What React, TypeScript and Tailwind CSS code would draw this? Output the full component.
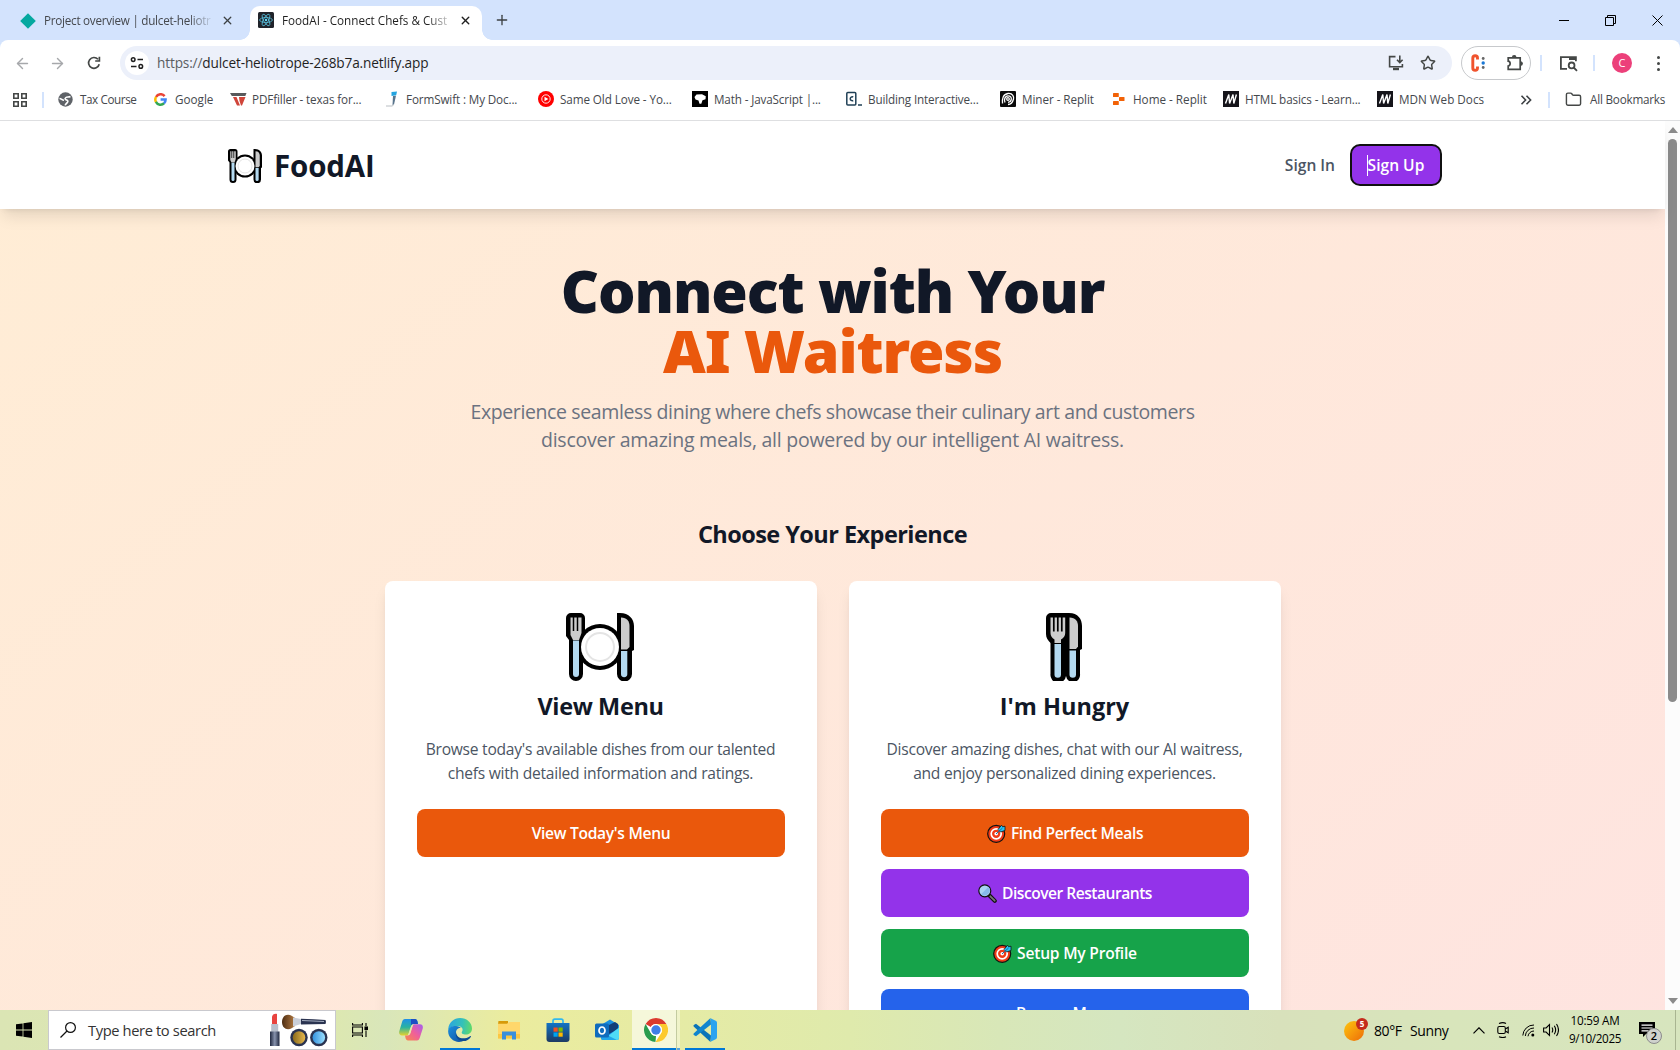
import type { ReactNode } from "react";
import { ArrowLeft, ArrowRight, Folder, Star, X, Plus } from "lucide-react";

/* ---------- Browser icons ---------- */

function ReactIcon() {
  return (
    <svg className="size-4 shrink-0" viewBox="0 0 16 16">
      <rect width="16" height="16" rx="1.5" fill="#20232a" />
      <g fill="none" stroke="#61dafb" strokeWidth=".8" opacity=".85">
        <ellipse cx="8" cy="8" rx="6.4" ry="2.5" />
        <ellipse cx="8" cy="8" rx="6.4" ry="2.5" transform="rotate(60 8 8)" />
        <ellipse cx="8" cy="8" rx="6.4" ry="2.5" transform="rotate(120 8 8)" />
      </g>
      <circle cx="8" cy="8" r="1.2" fill="#61dafb" />
    </svg>
  );
}

function ReloadIcon() {
  return (
    <svg className="size-4" viewBox="0 0 16 16" fill="none" stroke="#444746" strokeWidth="1.7">
      <path d="M13.2 9.2A5.4 5.4 0 1 1 12 4.3" />
      <path d="M13.4 1.8v4.2H9.2" />
    </svg>
  );
}

function TuneIcon() {
  return (
    <svg className="size-4" viewBox="0 0 16 16" fill="none" stroke="#1f1f1f" strokeWidth="1.5">
      <circle cx="4.2" cy="4.6" r="1.8" />
      <path d="M8.5 4.6h5.5M2 11.4h5.5" />
      <circle cx="11.8" cy="11.4" r="1.8" />
    </svg>
  );
}

function InstallIcon() {
  return (
    <svg className="size-[18px]" viewBox="0 0 18 18" fill="none" stroke="#444746" strokeWidth="1.6">
      <path d="M8.5 2.6H2.6v10.2h12.8V10" />
      <path d="M12.8 1.6v6.6M10 5.8l2.8 2.8 2.8-2.8" />
      <path d="M6 15h6" strokeWidth="2.4" />
    </svg>
  );
}

function PuzzleIcon() {
  return (
    <svg className="size-[18px]" viewBox="0 0 18 18" fill="none" stroke="#444746" strokeWidth="1.7">
      <path d="M2.2 3.8h12v11.6h-12v-3.4c2.600-.2 2.600-4.600 0-4.800z" />
      <path d="M6.500 3.400a1.700 1.700 0 0 1 3.400 0zM14.600 7.900a1.700 1.700 0 0 1 0 3.400z" fill="#444746" strokeWidth="1.200" />
    </svg>
  );
}

function LensIcon() {
  return (
    <svg className="size-[19px]" viewBox="0 0 19 19" fill="none" stroke="#444746" strokeWidth="1.8">
      <path d="M8 14.8H1.900V3.200h15v4" />
      <path d="M10 4.500h7" strokeWidth="3" />
      <circle cx="12.600" cy="11.400" r="2.900" />
      <path d="M14.700 13.500l3.300 3.300" />
    </svg>
  );
}

function GlobeIcon() {
  return (
    <svg className="size-[15px]" viewBox="0 0 15 15">
      <circle cx="7.500" cy="7.500" r="7.200" fill="#5f6368" />
      <path d="M1.500 6.500C3.500 6.500 4 8.300 6 8.300 M12.500 4.500C10.500 5.500 9 4.500 8 5.500S6.500 7 8 7.800s2.500 1 1.500 2.500-2 1.500-2.300 3" stroke="#fff" strokeWidth="1.600" fill="none" />
    </svg>
  );
}

function GoogleIcon() {
  return (
    <svg className="ml-px size-[13px]" viewBox="0 0 13 13" fill="none" strokeWidth="2.500">
      <path d="M10.600 3.100A5.200 5.200 0 0 0 2 4" stroke="#ea4335" />
      <path d="M2.100 3.800a5.200 5.200 0 0 0 0 5.400" stroke="#fbbc05" />
      <path d="M1.900 8.900a5.200 5.200 0 0 0 8.300 1.300" stroke="#34a853" />
      <path d="M10 10.400a5.200 5.200 0 0 0 1.600-3.900H6.600" stroke="#4285f4" />
    </svg>
  );
}

function PdfFillerIcon() {
  return (
    <svg className="h-3.5 w-[17px]" viewBox="0 0 17 14">
      <path d="M0 1h16.500l-1.200 3H1.800z" fill="#58595b" />
      <path d="M3 5h3.500L10 13.500H7zM9 5h6.500L12 13.500h-1L9.500 9z" fill="#d0453a" />
    </svg>
  );
}

function FormSwiftIcon() {
  return (
    <svg className="ml-0.5 h-4 w-3" viewBox="0 0 12 16">
      <path d="M5.500 1l5.500-.4-.8 3.600-4.700.8z" fill="#23a4e0" />
      <path d="M7 5l3-.2L8 13.500l-1.500.4z" fill="#59748c" />
      <path d="M0 15h6.500l1-1.500" stroke="#b9bec3" fill="none" />
    </svg>
  );
}

function YouTubeMusicIcon() {
  return (
    <svg className="size-4" viewBox="0 0 16 16">
      <circle cx="8" cy="8" r="8" fill="#f00" />
      <circle cx="8" cy="8" r="4.200" fill="none" stroke="#fff" strokeWidth=".9" />
      <path d="M6.500 5.700L10.300 8l-3.800 2.300z" fill="#fff" />
    </svg>
  );
}

function MathIcon() {
  return (
    <svg className="size-4" viewBox="0 0 16 16">
      <rect width="16" height="16" fill="#000" />
      <path d="M2.500 6L4.500 3.500l5.500-.3 3.800 2-.3 3-3 1L9.300 12.800H7.500L6.500 9.500 3.500 8.500z" fill="#fff" />
    </svg>
  );
}

function CodecademyIcon() {
  return (
    <svg className="size-4" viewBox="0 0 16 16" fill="none" stroke="#204056" strokeWidth="1.500">
      <rect x=".8" y="1.500" width="9" height="12.500" rx="1" />
      <path d="M7.200 6a2 2 0 1 0 0 3.500M12 14h4" />
    </svg>
  );
}

function MinerIcon() {
  return (
    <svg className="size-4" viewBox="0 0 16 16">
      <rect width="16" height="16" rx="1" fill="#0b0b0b" />
      <g fill="none" stroke="#fff" strokeWidth="1.300">
        <path d="M2.500 12.500C2 8 3 3 8 2.500S14 6 13.500 8 12 13.500 8 13.500" />
        <path d="M5 11.500C3.500 8 5.500 4.800 8 4.800s3.500 1.700 3.300 3.500S9.500 11.300 8 11.300" />
        <circle cx="8" cy="8" r="1.300" />
      </g>
    </svg>
  );
}

function ReplitIcon() {
  return (
    <svg className="ml-0.5 h-3.5 w-3" viewBox="0 0 12 14" fill="#f26207">
      <rect x="0" y="1" width="5.800" height="4" rx=".6" />
      <rect x="6" y="5" width="5.500" height="4" rx=".6" />
      <rect x="0" y="9" width="5.800" height="4" rx=".6" />
    </svg>
  );
}

function MdnIcon() {
  return (
    <svg className="size-4" viewBox="0 0 16 16">
      <rect width="16" height="16" fill="#15141a" />
      <path d="M2.500 12.500L5.800 3.500 6.600 12.500 10 3.500 10.800 12.500 13.400 3.500" fill="none" stroke="#fff" strokeWidth="1.400" />
    </svg>
  );
}

/* ---------- Emoji drawings ---------- */

function PlateEmoji({ className }: { className: string }) {
  return (
    <svg className={className} viewBox="0 0 68 68">
      <path d="M5 0h9a5 5 0 0 1 5 5v20l-2 3v33a7 7 0 0 1-14 0V27l-3-4V5a5 5 0 0 1 5-5z" fill="#000" />
      <path d="M51 0h3c9 0 14 6 14 13v24l-2 1v23a7 7 0 0 1-15 0z" fill="#000" />
      <circle cx="34" cy="34" r="23" fill="#000" />
      <path d="M4.500 4.500h11V20l-2.500 7H7L4.500 22z" fill="#ccc" />
      <path d="M7.500 4v14M11.500 4v14" stroke="#000" strokeWidth="1.500" />
      <path d="M7 27.500h6V61a3 3 0 0 1-6 0z" fill="#b3d9f0" />
      <circle cx="34" cy="34" r="19" fill="#fff" />
      <circle cx="34" cy="34" r="14" fill="none" stroke="#e4e4e4" strokeWidth="2" />
      <path d="M55 4.500c6 0 8.500 4 8.500 8.500v21L61 36.500h-6z" fill="#ccc" />
      <path d="M55 38h6.300v23a3.100 3.100 0 0 1-6.300 0z" fill="#b3d9f0" />
    </svg>
  );
}

function CutleryEmoji() {
  return (
    <svg className="mr-0.5 h-[68px] w-9" viewBox="0 0 36 68">
      <path d="M5 0h18c9 0 13 6 13 13v23l-2 1v24a7 7 0 0 1-14 2 7.500 7.500 0 0 1-15.500-2V30C2 27 0 25 0 21V5a5 5 0 0 1 5-5z" fill="#000" />
      <path d="M4.500 4.500h14.700V20c0 3-1.500 5-4.200 6.500v3.500H8.500v-3.500C6 25 4.500 23 4.500 20z" fill="#ccc" />
      <path d="M7.800 4v14.500M11.800 4v14.500M15.800 4v14.500" stroke="#000" strokeWidth="1.700" />
      <path d="M8.500 31H15v30.500a3.200 3.200 0 0 1-6.500 0z" fill="#b3d9f0" />
      <path d="M23.500 4.500c6 0 8.500 4 8.500 8.500v20.500L30 36h-6.500z" fill="#ccc" />
      <path d="M23.500 37.500H30v24a3.200 3.200 0 0 1-6.500 0z" fill="#b3d9f0" />
    </svg>
  );
}

function TargetEmoji() {
  return (
    <svg className="size-[19px] shrink-0" viewBox="0 0 19 19">
      <circle cx="9.200" cy="9.800" r="8.500" fill="#f03a17" stroke="#111" strokeWidth="1.200" />
      <circle cx="9.200" cy="9.800" r="5" fill="none" stroke="#fff" strokeWidth="1.700" />
      <circle cx="9.200" cy="9.800" r="1.800" fill="#fff" />
      <path d="M11 5.500L14.500 1.200l1.200 1.600 2.300-.6v4.300L13.500 8z" fill="#27c3f3" stroke="#111" strokeWidth=".8" />
      <path d="M9 10l6.500-6" stroke="#0b6ea8" strokeWidth="1" />
    </svg>
  );
}

function MagnifierEmoji() {
  return (
    <svg className="size-[19px] shrink-0" viewBox="0 0 19 19">
      <path d="M11.500 11.500l5.300 5.300" stroke="#111" strokeWidth="4" strokeLinecap="round" />
      <path d="M12.300 12.300l4.400 4.400" stroke="#777" strokeWidth="1.800" strokeLinecap="round" />
      <circle cx="6.800" cy="6.800" r="6" fill="#a9d3f2" stroke="#111" strokeWidth="1.200" />
      <path d="M2.800 10.500l7.700-7.700a5.500 5.500 0 0 1-7.700 7.700z" fill="#86b9ea" />
    </svg>
  );
}

/* ---------- Taskbar icons ---------- */

function WindowsIcon() {
  return (
    <svg className="size-4" viewBox="0 0 16 16" fill="#000">
      <path d="M0 2.300L6.600 1.400v6.200H0zM7.400 1.300L16 0v7.600H7.400zM0 8.400h6.600v6.200L0 13.700zM7.400 8.400H16V16l-8.600-1.200z" />
    </svg>
  );
}

function MakeupArt() {
  return (
    <svg className="h-[34px] w-[58px]" viewBox="0 0 58 34">
      <defs>
        <linearGradient id="gold"><stop stopColor="#8a6a1c" /><stop offset="1" stopColor="#e6b84c" /></linearGradient>
        <linearGradient id="sky"><stop stopColor="#3391dd" /><stop offset="1" stopColor="#9be0ff" /></linearGradient>
        <linearGradient id="tube"><stop stopColor="#20283f" /><stop offset=".5" stopColor="#8792ad" /><stop offset="1" stopColor="#20283f" /></linearGradient>
        <linearGradient id="bristle"><stop stopColor="#4e2d12" /><stop offset="1" stopColor="#b27a42" /></linearGradient>
      </defs>
      <path d="M2 12V3.500C3 1 5 .5 7 1v11z" fill="#e8433f" />
      <rect x="1.200" y="11" width="7" height="8" fill="#b9bfcc" />
      <rect x="0" y="18.500" width="9.500" height="14.500" fill="url(#tube)" />
      <path d="M12 9c0-6 5-9 10-6l3 2v8l-3 2c-5 3-10 0-10-6z" fill="url(#bristle)" />
      <path d="M23 4.500l8 1.500v5l-8 2.500z" fill="#c9ced8" />
      <path d="M31 5.800q13 .2 24.500 1.200 1 2 0 4L31 11.500z" fill="#2a3350" />
      <path d="M32 7.500l22 1" stroke="#a4adbf" />
      <circle cx="29" cy="24.500" r="8.700" fill="#2a3350" /><circle cx="29" cy="24.500" r="6.300" fill="url(#gold)" />
      <circle cx="48.800" cy="24.500" r="8.700" fill="#2a3350" /><circle cx="48.800" cy="24.500" r="6.300" fill="url(#sky)" />
    </svg>
  );
}

function TaskViewIcon() {
  return (
    <svg className="size-4" viewBox="0 0 16 16" fill="none" stroke="#000" strokeWidth="1.100">
      <path d="M.6 1v2h9.800V1M.6 15v-2h9.800v2M.6 5h9.800v6H.6zM14 1v3M14 8.500V15" />
      <rect x="13" y="5" width="2.500" height="2.500" fill="#000" />
    </svg>
  );
}

function CopilotIcon() {
  return (
    <svg className="size-6" viewBox="0 0 24 24">
      <defs>
        <linearGradient id="cpA" x1="0" y1="0" x2="0" y2="1"><stop stopColor="#1f8fe8" /><stop offset=".5" stopColor="#29b3a0" /><stop offset="1" stopColor="#e8d22c" /></linearGradient>
        <linearGradient id="cpB" x1="1" y1="0" x2="0" y2="1"><stop stopColor="#a55ef0" /><stop offset=".5" stopColor="#ef5f9a" /><stop offset="1" stopColor="#f8894a" /></linearGradient>
      </defs>
      <path d="M6 1h10c1.500 0 2 1 2.500 2.500L19 6h-4c-2 0-2.500 1-3 2.500L10 15c-.6 2-1.500 2.500-3 2.500H3c-2.500 0-3.500-2-2.500-5l2.700-9C3.700 2 4.500 1 6 1z" fill="url(#cpA)" />
      <path d="M12 1h4c1.500 0 2 1 2.500 2.500L19 6h-5c-1 0-1.500.5-2 1.500z" fill="#1c4fc4" />
      <path d="M18 22.500H9c-1.500 0-2-1-2.500-2.500L6 17.500h2.500c1.500 0 2.200-.8 2.800-2.500l2-6.500c.6-2 1.500-2.200 3-2.200H21c2.500 0 3.500 2 2.500 5l-2.700 8.500c-.5 1.600-1.200 2.700-2.800 2.700z" fill="url(#cpB)" />
      <path d="M11 11l1-2.500c.4-1 1-1.500 2-1.500l-2.500 8c-.6 1.600-1 2-2.500 2.200z" fill="#e4eaa8" />
    </svg>
  );
}

function EdgeIcon() {
  return (
    <svg className="size-6" viewBox="0 0 24 24">
      <defs>
        <linearGradient id="edA" x1="0" y1=".3" x2="1" y2=".4"><stop stopColor="#2aa5e0" /><stop offset=".6" stopColor="#35c1b8" /><stop offset="1" stopColor="#5fd96a" /></linearGradient>
        <linearGradient id="edB" x1="0" y1="0" x2="1" y2="1"><stop stopColor="#1c8fdd" /><stop offset="1" stopColor="#0f4fa0" /></linearGradient>
      </defs>
      <path d="M.3 10.500C1 4.500 6 0 12 0c7 0 12 5 12 10.500 0 4-3 6-6 6-3.300 0-5-1.200-4-2.700 1.700-2.500 0-5.800-4.500-5.800C5 8 1.500 9 .3 12z" fill="url(#edA)" />
      <path d="M.2 12.500C.8 8.500 5 7.800 8 8c2.500.2 4 1 4.800 2-3.500-.5-5 2.500-4.800 5 .3 5 5 7.500 9 6.800-2 1.500-4 2.200-6 2.200C5 24-.5 18.500.2 12.500z" fill="url(#edB)" />
      <path d="M8 14c.2 6 7.500 8.500 14 4.200.8-.4 1.200.1.800.7C21 21.800 17.500 23.500 14.500 23 9.500 22.500 7 18.500 8 14z" fill="#0c4a93" />
    </svg>
  );
}

function ExplorerIcon() {
  return (
    <svg className="h-[19px] w-[22px]" viewBox="0 0 22 19">
      <path d="M.5 0h9.500v3H0z" fill="#d79a09" />
      <path d="M0 2.800h9L11 1h11v16.500H0z" fill="#ffd76b" />
      <path d="M0 13h22v4.500H0z" fill="#fbc743" />
      <path d="M4 18.500V10.500h14v8h-4V14.500H8v4z" fill="#3a8fdc" />
    </svg>
  );
}

function StoreIcon() {
  return (
    <svg className="size-6" viewBox="0 0 24 24">
      <defs><linearGradient id="st" x1="0" y1="0" x2="0" y2="1"><stop stopColor="#1273c4" /><stop offset="1" stopColor="#1d3a63" /></linearGradient></defs>
      <path d="M7 6V3q0-1.800 1.800-1.800h6.400Q17 1.200 17 3v3" fill="none" stroke="#31b9ee" strokeWidth="1.700" />
      <path d="M.5 5h23v16q0 3-3 3h-17q-3 0-3-3z" fill="url(#st)" />
      <path d="M7.500 9.500h4.200v4.200H7.500z" fill="#f25022" /><path d="M12.500 9.500h4.200v4.200h-4.200z" fill="#7fba00" />
      <path d="M7.500 14.500h4.200v4.200H7.500z" fill="#00a4ef" /><path d="M12.500 14.500h4.200v4.200h-4.200z" fill="#ffb900" />
    </svg>
  );
}

function OutlookIcon() {
  return (
    <svg className="size-6" viewBox="0 0 24 24">
      <path d="M6 7l9-5.500L24 7v13q0 2-2 2H8q-2 0-2-2z" fill="#1a8fe0" />
      <path d="M8 10l12-6 3 2v5l-9 5z" fill="#123f78" />
      <path d="M24 9.500V20q0 2-2 2H8L24 9.500z" fill="#4fdcf7" />
      <path d="M6 14l16 8H8q-2 0-2-2z" fill="#20a7ea" />
      <rect x="0" y="5.500" width="14" height="14" rx="1.500" fill="#0f6cbd" />
      <ellipse cx="7" cy="12.500" rx="3" ry="3.500" fill="none" stroke="#fff" strokeWidth="1.700" />
    </svg>
  );
}

function ChromeIcon() {
  return (
    <svg className="size-6" viewBox="0 0 24 24">
      <circle cx="12" cy="12" r="12" fill="#fff" />
      <path d="M12 0a12 12 0 0 1 10.400 6H12a6 6 0 0 0-5.200 3L1.600 6A12 12 0 0 1 12 0z" fill="#db3a2d" />
      <path d="M1.600 6l5.200 9A6 6 0 0 0 12 18l-.5 6A12 12 0 0 1 1.600 6z" fill="#2a9c4c" />
      <path d="M22.400 6A12 12 0 0 1 11.500 24l5.700-9a6 6 0 0 0 0-6L12 6z" fill="#fcca2e" />
      <circle cx="12" cy="12" r="6" fill="#fff" /><circle cx="12" cy="12" r="4.700" fill="#3f7ee8" />
    </svg>
  );
}

function VSCodeIcon() {
  return (
    <svg className="size-6" viewBox="0 0 24 24">
      <path d="M18 17.500L3 5.800 1.200 6.700q-1.400.9-.3 2L17.500 24z" fill="#0a73b8" />
      <path d="M18 6.500L3 18.200l-1.800-.9q-1.400-.9-.3-2L17.500 0z" fill="#0f85cf" />
      <path d="M17 0l5.700 2.700q1.300.6 1.300 2v14.600q0 1.400-1.300 2L17 24q1 0 1-2V2q0-2-1-2z" fill="#2ba4f0" />
    </svg>
  );
}

/* ---------- Browser chrome ---------- */

type Bookmark = { icon: ReactNode; label: string; slot: string; text: string };

const bookmarks: Bookmark[] = [
  { icon: <GlobeIcon />, label: "Tax Course", slot: "w-[95px]", text: "tracking-[-0.41px]" },
  { icon: <GoogleIcon />, label: "Google", slot: "w-[77px]", text: "tracking-normal" },
  { icon: <PdfFillerIcon />, label: "PDFfiller - texas for...", slot: "w-[154px]", text: "tracking-[-0.12px]" },
  { icon: <FormSwiftIcon />, label: "FormSwift : My Doc...", slot: "w-[154px]", text: "tracking-[-0.13px]" },
  { icon: <YouTubeMusicIcon />, label: "Same Old Love - Yo...", slot: "w-[154px]", text: "tracking-[-0.09px]" },
  { icon: <MathIcon />, label: "Math - JavaScript |...", slot: "w-[154px]", text: "tracking-[-0.14px]" },
  { icon: <CodecademyIcon />, label: "Building Interactive...", slot: "w-[154px]", text: "tracking-[-0.15px]" },
  { icon: <MinerIcon />, label: "Miner - Replit", slot: "w-[111px]", text: "tracking-[-0.06px]" },
  { icon: <ReplitIcon />, label: "Home - Replit", slot: "w-[112px]", text: "tracking-normal" },
  { icon: <MdnIcon />, label: "HTML basics - Learn...", slot: "w-[154px]", text: "tracking-[-0.12px]" },
  { icon: <MdnIcon />, label: "MDN Web Docs", slot: "w-[143px]", text: "tracking-normal" },
];

function TabStrip() {
  return (
    <div className="flex h-10 shrink-0 items-end bg-[#d3e3fd] text-[11.7px] text-[#1f1f1f]">
      <div className="flex h-[38px] w-[250px] items-center pb-[1px] pl-5">
        <svg className="mr-2 size-4 shrink-0" viewBox="0 0 16 16"><path d="M8 .2L15.800 8 8 15.800.2 8z" fill="#05a8a0" /></svg>
        <span className="w-[170px] whitespace-nowrap tracking-[-0.26px] text-[#45484d] [mask-image:linear-gradient(to_right,#000_145px,transparent_170px)]">Project overview | dulcet-heliotr</span>
        <X className="ml-[7px] size-[13px] text-[#3c4043]" strokeWidth={2.4} />
      </div>
      <div className="relative flex h-[34px] w-[232px] items-center rounded-t-[10px] bg-white pb-1.5 pl-2">
        <span className="absolute bottom-0 -left-2.5 size-2.5 bg-[radial-gradient(circle_at_0_0,transparent_9.500px,#fff_10px)]" />
        <span className="absolute -right-2.5 bottom-0 size-2.5 bg-[radial-gradient(circle_at_100%_0,transparent_9.500px,#fff_10px)]" />
        <ReactIcon />
        <span className="ml-2 w-[168px] pt-0.5 whitespace-nowrap [mask-image:linear-gradient(to_right,#000_145px,transparent_172px)]">FoodAI - Connect Chefs &amp; Cust</span>
        <X className="ml-[9px] size-[13px]" strokeWidth={2.600} />
      </div>
      <Plus className="mb-3 ml-3 size-4 text-[#3c4043]" strokeWidth={2} />
      <div className="mb-3.5 ml-auto flex items-center pr-[17px]">
        <span className="mr-9 h-px w-2.5 bg-black" />
        <svg className="mr-9 size-[11px]" viewBox="0 0 11 11" fill="none" stroke="#000"><path d="M.5 2.500h8v8h-8zM2.500 2.500v-2h8v8h-2" /></svg>
        <svg className="size-[11px]" viewBox="0 0 11 11" stroke="#000"><path d="M.5.5l10 10M10.500.5l-10 10" /></svg>
      </div>
    </div>
  );
}

function Toolbar() {
  return (
    <div className="flex h-[46px] shrink-0 items-center">
      <div className="flex w-[120px] shrink-0 items-center gap-[18px] pl-3.5">
        <ArrowLeft className="size-[17px] text-[#a6a8ab]" strokeWidth={2} />
        <ArrowRight className="size-[17px] text-[#a6a8ab]" strokeWidth={2} />
        <span className="ml-0.5"><ReloadIcon /></span>
      </div>
      <div className="flex h-[34px] w-[1332px] shrink-0 items-center rounded-full bg-[#ecf0fa] pl-[5px]">
        <span className="flex size-6 items-center justify-center rounded-full bg-white"><TuneIcon /></span>
        <span className="ml-2 pt-px text-[13.650px] tracking-[-0.150px] text-[#1f1f1f]"><span className="text-[#5a5d61]">https://</span>dulcet-heliotrope-268b7a.netlify.app</span>
        <span className="mr-4 ml-auto flex items-center gap-[15px]"><InstallIcon /><Star className="size-[16px] text-[#444746]" strokeWidth={2.200} /></span>
      </div>
      <div className="ml-[9px] flex h-[34px] w-[70px] items-center rounded-full border border-[#c7c9cc] pl-2">
        <svg className="h-[18px] w-[17px]" viewBox="0 0 17 18"><path d="M7.500 5.500V4q0-2.300-2.300-2.300T2.800 4v10q0 2.300 2.400 2.300T7.500 14v-1.500" fill="none" stroke="#f0532d" strokeWidth="2.900" /><circle cx="13.200" cy="4.500" r="1.400" fill="#666" /><circle cx="13.200" cy="9" r="1.700" fill="#1a78d6" /><circle cx="13.200" cy="13.500" r="1.400" fill="#666" /></svg>
        <span className="ml-[19px]"><PuzzleIcon /></span>
      </div>
      <span className="ml-[9px] h-4 w-0.5 bg-[#d3e3fd]" />
      <span className="ml-[17px]"><LensIcon /></span>
      <span className="ml-[15px] h-4 w-0.5 bg-[#d3e3fd]" />
      <span className="ml-[17px] flex size-5 items-center justify-center rounded-full bg-[#ec407a] text-[11px] text-white">C</span>
      <span className="ml-[25px] flex flex-col gap-[3px]">
        <span className="size-[3px] rounded-full bg-[#444746]" /><span className="size-[3px] rounded-full bg-[#444746]" /><span className="size-[3px] rounded-full bg-[#444746]" />
      </span>
    </div>
  );
}

function BookmarksBar() {
  return (
    <div className="flex h-[35px] shrink-0 items-center border-b border-[#dedfe1] pb-[7px] text-[11.7px] text-[#45484d]">
      <svg className="ml-[13px] size-3.5" viewBox="0 0 14 14" fill="none" stroke="#444746" strokeWidth="1.600"><path d="M.8.8h4.400v4.400H.8zM8.800.8h4.400v4.400H8.800zM.8 8.800h4.400v4.400H.8zM8.800 8.800h4.400v4.400H8.800z" /></svg>
      <span className="ml-[15px] h-4 w-0.5 bg-[#d3e3fd]" />
      <div className="ml-[14px] flex">
        {bookmarks.map((b) => (
          <div key={b.label} className={`flex shrink-0 items-center ${b.slot}`}>
            <span className="flex w-[22px] shrink-0 items-center">{b.icon}</span>
            <span className={`pt-px whitespace-nowrap ${b.text}`}>{b.label}</span>
          </div>
        ))}
      </div>
      <svg className="h-2.5 w-3 shrink-0" viewBox="0 0 12 10" fill="none" stroke="#3c4043" strokeWidth="1.600"><path d="M1.500.8L5.600 5 1.500 9.200M6.500.8L10.600 5 6.500 9.200" /></svg>
      <span className="ml-4 h-4 w-0.5 shrink-0 bg-[#d3e3fd]" />
      <Folder className="ml-[15px] size-[17px] shrink-0 text-[#444746]" strokeWidth={2} />
      <span className="ml-2 pt-px whitespace-nowrap tracking-[-0.21px]">All Bookmarks</span>
    </div>
  );
}

/* ---------- Web page ---------- */

function SiteHeader() {
  return (
    <header className="relative flex h-[88px] shrink-0 items-center bg-white pr-[223px] pl-[228px] shadow-lg">
      <PlateEmoji className="mt-0.5 size-[34px]" />
      <span className="ml-3 pt-0.5 text-[29.500px] font-bold tracking-[-0.150px] text-[#111827]">FoodAI</span>
      <span className="mr-[15px] ml-auto pt-0.5 text-[15.600px] font-semibold text-[#4b5563]">Sign In</span>
      <button className="relative h-[42px] w-[92px] rounded-[10px] border-2 border-[#101010] bg-[#9333ea] pt-0.5 text-[15.600px] font-[650] text-white">
        Sign Up
        <span className="absolute top-[9px] left-[15px] h-[21px] w-px bg-white" />
      </button>
    </header>
  );
}

function ActionButton({ color, text, children, icon }: { color: string; text: string; children: ReactNode; icon?: ReactNode }) {
  return (
    <button className={`flex h-12 w-full shrink-0 items-center justify-center gap-[5px] rounded-lg pl-px text-[15.600px] font-[650] text-white ${color} ${text}`}>
      {icon}
      <span className="pt-0.5">{children}</span>
    </button>
  );
}

function ExperienceCard({ art, title, titleClass, lines, children }: { art: ReactNode; title: string; titleClass: string; lines: string[]; children: ReactNode }) {
  return (
    <section className="flex h-[620px] w-[432px] flex-col items-center rounded-lg bg-white p-8 shadow-lg">
      {art}
      <h3 className={`mt-[9px] text-[23.500px] leading-8 font-bold text-[#111827] ${titleClass}`}>{title}</h3>
      <p className="mt-[15px] text-center text-[15.600px] leading-6 tracking-[-0.25px] text-[#4b5563]">
        {lines.map((l) => <span key={l} className="block whitespace-nowrap">{l}</span>)}
      </p>
      <div className="mt-6 flex w-full flex-col gap-3">{children}</div>
    </section>
  );
}

function FoodPage() {
  return (
    <div className="h-[1350px] w-[1665px] shrink-0 bg-linear-to-br from-[#ffedd5] to-[#fee2e2]">
      <SiteHeader />
      <main className="flex flex-col items-center pt-[51px]">
        <h1 className="flex flex-col items-center font-['Noto_Sans'] text-[59px] leading-[60px] font-black text-[#111827]">
          <span className="tracking-[-1.050px]">Connect with Your</span>
          <span className="tracking-[-1.100px] text-[#ea580c]">AI Waitress</span>
        </h1>
        <p className="mt-[18px] flex flex-col items-center text-[19.500px] leading-7 text-[#6b7280]">
          <span className="tracking-[-0.380px]">Experience seamless dining where chefs showcase their culinary art and customers</span>
          <span className="tracking-[-0.250px]">discover amazing meals, all powered by our intelligent AI waitress.</span>
        </p>
        <h2 className="mt-16 text-[23.500px] leading-8 font-bold tracking-[-0.550px] text-[#111827]">Choose Your Experience</h2>
        <div className="mt-[31px] flex gap-8">
          <ExperienceCard
            art={<PlateEmoji className="mr-0.5 size-[68px]" />}
            title="View Menu"
            titleClass="tracking-[-0.380px]"
            lines={["Browse today's available dishes from our talented", "chefs with detailed information and ratings."]}
          >
            <ActionButton color="bg-[#ea580c]" text="tracking-[-0.300px]">View Today's Menu</ActionButton>
          </ExperienceCard>
          <ExperienceCard
            art={<CutleryEmoji />}
            title="I'm Hungry"
            titleClass="tracking-normal"
            lines={["Discover amazing dishes, chat with our AI waitress,", "and enjoy personalized dining experiences."]}
          >
            <ActionButton color="bg-[#ea580c]" text="tracking-[-0.350px]" icon={<TargetEmoji />}>Find Perfect Meals</ActionButton>
            <ActionButton color="bg-[#9333ea]" text="tracking-[-0.500px]" icon={<MagnifierEmoji />}>Discover Restaurants</ActionButton>
            <ActionButton color="bg-[#16a34a]" text="tracking-[-0.220px]" icon={<TargetEmoji />}>Setup My Profile</ActionButton>
            <ActionButton color="bg-[#2563eb]" text="tracking-[-0.480px]">Browse Menu</ActionButton>
          </ExperienceCard>
        </div>
      </main>
    </div>
  );
}

function Scrollbar() {
  return (
    <div className="flex w-[15px] shrink-0 flex-col items-center bg-[#fcfcfc] py-[6px]">
      <span className="h-0 w-0 border-x-[5px] border-b-[6px] border-x-transparent border-b-[#8b8b8b]" />
      <span className="mt-1.5 h-[563px] w-[9px] rounded-full bg-[#8b8b8b]" />
      <span className="mt-auto h-0 w-0 border-x-[5px] border-t-[6px] border-x-transparent border-t-[#8b8b8b]" />
    </div>
  );
}

/* ---------- Taskbar ---------- */

function TaskApp({ icon, open = false }: { icon: ReactNode; open?: boolean }) {
  return (
    <div className="flex h-10 w-[49px] flex-col items-center">
      <span className="flex h-[38px] items-center pt-0.5">{icon}</span>
      <span className={`h-0.5 ${open ? "w-10 bg-[#0078d7]" : "w-0"}`} />
    </div>
  );
}

/* Focused window with a second one stacked behind its right edge. */
function ActiveTaskApp({ icon }: { icon: ReactNode }) {
  return (
    <div className="flex h-10 w-[49px]">
      <div className="ml-px flex w-11 flex-col items-center bg-white/60">
        <span className="flex h-[38px] items-center pt-0.5 pl-1">{icon}</span>
        <span className="h-0.5 w-full bg-[#0078d7]" />
      </div>
      <div className="flex w-1 flex-col border-l border-[#c3cba0] bg-white/40">
        <span className="mt-auto h-0.5 w-full bg-[#5aa3da]" />
      </div>
    </div>
  );
}

function Taskbar() {
  return (
    <div className="flex h-10 shrink-0 items-center bg-[linear-gradient(to_right,#dbe5b4_0,#dde8b0_330px,#d9e6ba_385px,#ebec9e_510px,#e6eba4_660px,#dfeaac_850px,#d8e7b8_1000px,#d5e6c0_1120px,#d8e1bb_1280px,#d8e5bb_1450px,#d7e5be_1680px)] text-black">
      <span className="flex w-12 justify-center"><WindowsIcon /></span>
      <div className="flex h-10 w-72 items-center border border-[#c9c9ce] bg-white pl-[11px]">
        <svg className="size-4" viewBox="0 0 16 16" fill="none" stroke="#111" strokeWidth="1.200"><circle cx="10.500" cy="5.500" r="4.900" /><path d="M7 9l-6.500 6.500" /></svg>
        <span className="ml-3 text-[14.700px] tracking-[-0.380px] text-[#333]">Type here to search</span>
        <span className="mr-[7px] ml-auto"><MakeupArt /></span>
      </div>
      <span className="flex w-12 justify-center"><TaskViewIcon /></span>
      <div className="ml-0.5 flex">
        <TaskApp icon={<CopilotIcon />} />
        <TaskApp icon={<EdgeIcon />} open />
        <TaskApp icon={<ExplorerIcon />} />
        <TaskApp icon={<StoreIcon />} />
        <TaskApp icon={<OutlookIcon />} />
        <ActiveTaskApp icon={<ChromeIcon />} />
        <TaskApp icon={<VSCodeIcon />} open />
      </div>
      <div className="ml-auto flex items-center">
        <span className="relative mr-2 flex h-[22px] w-[22px] items-end">
          <span className="size-5 rounded-full bg-linear-to-br from-[#fcc50f] to-[#ec6a08]" />
          <span className="absolute top-[-1px] -right-0.5 flex size-3 items-center justify-center rounded-full bg-[#c42b1c] text-[8px] font-bold text-white">5</span>
        </span>
        <span className="w-[36px] text-[14px] tracking-[-0.400px]">80°F</span>
        <span className="w-[63px] text-[14px] tracking-[-0.400px]">Sunny</span>
        <svg className="h-[7px] w-3" viewBox="0 0 12 7" fill="none" stroke="#000" strokeWidth="1.200"><path d="M.5 6.300L6 .8l5.500 5.500" /></svg>
        <svg className="ml-3 h-4 w-3" viewBox="0 0 12 16" fill="none" stroke="#000" strokeWidth="1.100"><path d="M2 1.500q4-1.800 7 0M2 14.800q4 1.500 7 0" /><rect x=".8" y="4.500" width="7.500" height="7" rx="1.500" /><path d="M8.300 7l2.900-1.800v5.600L8.300 9" /></svg>
        <svg className="ml-[13px] h-3.5 w-[13px]" viewBox="0 0 13 14" fill="none" stroke="#000"><path d="M.8 12.500A11 11 0 0 1 12 2M3.300 13A8.500 8.500 0 0 1 12 5M6 13.300A6 6 0 0 1 12 8" /><circle cx="10.800" cy="12" r="1.500" fill="#000" stroke="none" /></svg>
        <svg className="ml-2 h-3.5 w-4" viewBox="0 0 16 14" fill="none" stroke="#000" strokeWidth="1.100"><path d="M.6 5h2.500L6.500 1.500v11L3.100 9H.6zM9 4.500q1.500 2.500 0 5M11.300 2.800q2.700 4.200 0 8.400M13.500 1q4 6 0 12" /></svg>
        <div className="ml-2.5 flex w-[52px] flex-col items-center pb-0.5 text-[11.700px] leading-[18px] whitespace-nowrap">
          <span className="tracking-[-0.200px]">10:59 AM</span>
          <span className="tracking-[-0.370px]">9/10/2025</span>
        </div>
        <span className="relative ml-[18px] h-6 w-4">
          <svg className="mt-1 h-[15px] w-4" viewBox="0 0 16 15"><path d="M0 0h16v12H7l-3 3v-3H0z" fill="#000" /><path d="M2.500 3.200h11M2.500 6h11M2.500 8.800h7" stroke="#fff" strokeWidth="1.200" /></svg>
          <span className="absolute top-[10px] left-[7px] flex size-4 items-center justify-center rounded-full border border-[#8c8c8c] bg-[#cfd2cd] text-[11px] font-semibold">2</span>
        </span>
        <span className="ml-5 h-10 w-[5px] border-l border-[#a9b591]" />
      </div>
    </div>
  );
}

export default function App() {
  return (
    <div className="flex h-[1050px] w-[1680px] flex-col overflow-hidden bg-white font-['Open_Sans','Noto_Sans',sans-serif]">
      <div className="flex shrink-0 flex-col bg-[#d3e3fd]">
        <TabStrip />
        <div className="rounded-t-lg bg-white">
          <Toolbar />
          <BookmarksBar />
        </div>
      </div>
      <div className="flex h-[889px] shrink-0 overflow-hidden">
        <FoodPage />
        <Scrollbar />
      </div>
      <Taskbar />
    </div>
  );
}
